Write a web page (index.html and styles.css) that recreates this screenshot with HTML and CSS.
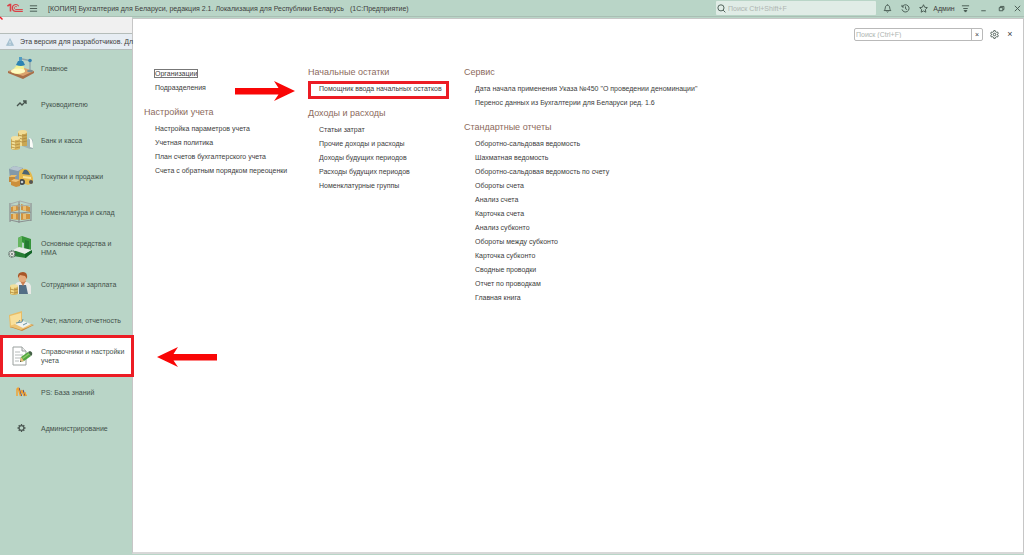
FILE: index.html
```html
<!DOCTYPE html>
<html lang="ru">
<head>
<meta charset="utf-8">
<meta name="viewport" content="width=device-width, initial-scale=1">
<title>Бухгалтерия для Беларуси</title>
<link rel="stylesheet" href="styles.css">
</head>
<body>
<div class="app">
  <header class="titlebar">
    <svg class="logo" viewBox="0 0 16 10" fill="none" stroke="#dc3f45"><path d="M.4 3.200 2.700 1.500H3.500V8.500" stroke-width="1.600"/><path d="M11.700 3.300A3.400 3.400 0 1 0 8.800 8.400H15.800" stroke-width="1.100"/><path d="M10 4.100A1.500 1.500 0 1 0 8.800 6.500H15.800" stroke-width=".9"/></svg>
    <button class="tool menu-button" aria-label="Меню"><svg viewBox="0 0 10 10" class="icon"><path d="M1 2h8M1 5h8M1 8h8"/></svg></button>
    <h1 class="title">[КОПИЯ] Бухгалтерия для Беларуси, редакция 2.1. Локализация для Республики Беларусь <span class="suffix">(1С:Предприятие)</span></h1>
    <label class="global-search">
      <svg viewBox="0 0 10 10" class="icon"><circle cx="4.400" cy="4.300" r="3.400"/><path d="m6.800 6.800 2.500 2.500"/></svg>
      <input type="text" aria-label="Глобальный поиск" placeholder="Поиск Ctrl+Shift+F">
    </label>
    <div class="tools">
      <button class="tool" aria-label="Уведомления"><svg viewBox="0 0 10 10" class="icon"><path d="M1.300 7.300h7.400C7.500 6.200 7.700 5 7.300 3.400 7 2 6.200 1.300 5 1.300S3 2 2.700 3.400C2.300 5 2.500 6.200 1.300 7.300ZM4 8.300q1 1.400 2 0M5 .4v1"/></svg></button>
      <button class="tool" aria-label="История"><svg viewBox="0 0 10 10" class="icon"><path d="M1.400 3A4 4 0 1 1 1.100 6M1.100 1v2.300h2.300M5 2.700V5.200L6.800 6.300"/></svg></button>
      <button class="tool" aria-label="Избранное"><svg viewBox="0 0 10 10" class="icon"><path d="m5 .8 1.300 2.800 3 .4-2.200 2.100.5 3L5 7.700 2.400 9.100l.5-3L.7 4l3-.4Z"/></svg></button>
      <button class="user">Админ</button>
      <button class="tool" aria-label="Настройка окна"><svg viewBox="0 0 10 10" class="icon"><path d="M1 2h8M2.500 5h5"/><path d="M3.500 7.200h3L5 9Z" fill="#42534c"/></svg></button>
      <button class="tool" aria-label="Свернуть"><svg viewBox="0 0 10 10" class="icon"><path d="M2.500 7.500h5"/></svg></button>
      <button class="tool" aria-label="Восстановить"><svg viewBox="0 0 10 10" class="icon"><path d="M2.500 4h4v3.500h-4zM3.700 4V2.700h4v3.500H6.500"/></svg></button>
      <button class="tool" aria-label="Закрыть окно"><svg viewBox="0 0 10 10" class="icon"><path d="m2 2 6 6m0-6-6 6"/></svg></button>
    </div>
  </header>

  <div class="workspace">
    <aside class="sidebar">
      <div class="tabstrip"><svg class="tick" viewBox="0 0 3 3"><path d="M0 0 2.500 2.500" stroke="#ec1c24" stroke-width="1.400"/></svg></div>
      <p class="notice"><svg viewBox="0 0 10 10" class="warning"><path d="M5 .7 9.500 9.300H.5Z" fill="#a9c3d3" stroke="#8fb0c4" stroke-width=".6"/><path d="M5 3.500v3m0 .9v1" stroke="#edf2f6"/></svg>Эта версия для разработчиков. Дл</p>
      <nav class="sections">
        <a class="section" href="#main"><span class="picture"><svg viewBox="0 0 26 24">
          <path d="m0 15 13-4 13 4-11 7Z" fill="#dba36e"/><path d="m0 15 15 5 11-5v2l-11 6L0 17Z" fill="#a96f48"/><path d="m9 9-6 7q6 4 14 0l-2-8Z" fill="#f3f295"/><ellipse cx="10" cy="15" rx="7" ry="2.500" fill="#fffbc2"/><path d="m8 9 2-4h5l2 4q-4 2-9 0Z" fill="#2c83b3"/><path d="M11 5V1h3v4" fill="#4f9cc4"/><path d="m14 3 8 1.500V15" stroke="#8fa5ac" stroke-width="1.300" fill="none"/><circle cx="22" cy="4.500" r="1.800" fill="#327fb1"/><ellipse cx="22" cy="15" rx="3" ry="1.300" fill="#7b8e91"/>
        </svg></span><span>Главное</span></a>
        <a class="section" href="#head"><span class="picture"><svg viewBox="0 0 26 24"><path d="m9 14 3-3 2 2 4-4m-3 0h3v3" fill="none" stroke="#46534d" stroke-width="1.300"/></svg></span><span>Руководителю</span></a>
        <a class="section" href="#bank"><span class="picture"><svg viewBox="0 0 26 24">
          <path d="m14 15 8-5 3 2v9h-3l-8-3Z" fill="#9fb5b4"/><path d="M21 10q4-1 4 10l-3-1v-7Z" fill="#fbfcf8"/><path d="M10 4h9v14h-9Z" fill="#c9a753"/><path d="M11 4h3v14h-3Z" fill="#efdb91"/><ellipse cx="14.500" cy="4" rx="4.500" ry="2" fill="#f0dc96"/><path d="M10 7q4 2 9 0m-9 3q4 2 9 0m-9 3q4 2 9 0" stroke="#ac8840" fill="none" stroke-width=".8"/><path d="M3 10h9v11q-5 2-9 0Z" fill="#d8b660"/><path d="M4 10h3v11H4Z" fill="#f2df98"/><ellipse cx="7.500" cy="10" rx="4.500" ry="2" fill="#f4e2a1"/><path d="M3 13q4 2 9 0m-9 3q4 2 9 0m-9 3q4 2 9 0" stroke="#b18b3f" fill="none" stroke-width=".8"/>
        </svg></span><span>Банк и касса</span></a>
        <a class="section" href="#sales"><span class="picture"><svg viewBox="0 0 26 24">
          <path d="m1 5 5-3 9 2v12H2Z" fill="#8299aa"/><path d="m1 5 5-3 9 2-5 3Z" fill="#b6c5cf"/><path d="M11 9q1-5 7-4 5 1 7 9v5l-5 2-9-3Z" fill="#e5b94c"/><path d="m14 10 2-4q4-1 6 5Z" fill="#4c6473"/><path d="m15 12 8 1v2l-8-1Z" fill="#f8e39a"/><circle cx="14" cy="18" r="3" fill="#42474a"/><circle cx="14" cy="18" r="1.300" fill="#c7cecd"/><circle cx="23" cy="18" r="2" fill="#555"/><path d="M1 13h6v5H1Z" fill="#bf893d"/><path d="m1 13 2-2h6l-2 2Z" fill="#e9bc6b"/><path d="m3 17 3-2 6 1v6l-4 1-5-2Z" fill="#cc8f3c"/><path d="m3 17 3-2 6 1-4 2Z" fill="#eec279"/>
        </svg></span><span>Покупки и продажи</span></a>
        <a class="section" href="#stock"><span class="picture"><svg viewBox="0 0 26 24">
          <path d="m3 7 9-3v6l-9 2Zm10-3 9 3v5l-9-2Zm-10 10 9-1v7l-9-1Zm10-1 9 1v5l-9 1Z" fill="#cf9340"/><path d="m5 6 3-1v5l-3 1Zm10-1 3 1v5l-3-1ZM5 14h3v5H5Zm10 0h3v5h-3Z" fill="#ebbd70"/><path d="M2 3v19M11 1v22M23 3v18M2 12l9 1 12-1M2 20l9 2 12-2" stroke="#8b9090" stroke-width="1.200" fill="none"/><path d="M2 4 12 1l11 3M2 5l9 1 12-1" stroke="#a7adab" fill="none"/>
        </svg></span><span>Номенклатура и склад</span></a>
        <a class="section" href="#assets"><span class="picture"><svg viewBox="0 0 26 24">
          <path d="m10 2 4-2 9 3v14l-7-2V7l-3-1v9l-3-1Z" fill="#36943b"/><path d="m10 2 4-2v13l-4 1Z" fill="#66b660"/><path d="m17 4 4 1v10l-4-1Z" fill="#267a32"/><path d="m5 16 6-3 13 3-6 6-13-2Z" fill="#287d35"/><path d="m5 14 6-3 13 3-7 4Z" fill="#e7ece8"/><path d="m17 18 7-4v3l-7 5Z" fill="#146428"/><circle cx="4" cy="18" r="3" fill="#e0e4df" stroke="#52605a" stroke-width="1.500" stroke-dasharray="1 .6"/><circle cx="4" cy="18" r="1" fill="#6a756e"/>
        </svg></span><span>Основные средства и НМА</span></a>
        <a class="section" href="#staff"><span class="picture"><svg viewBox="0 0 26 24">
          <path d="M7 22V13q2-4 7-3 7-1 9 4v8Z" fill="#e9e9e6"/><path d="M11 13h7l2 9h-9Z" fill="#536e85"/><path d="m12 9 3 5 3-5" fill="#cb8053"/><circle cx="14.500" cy="6" r="4" fill="#e5aa7b"/><path d="M10 6q-1-6 5-6 5 0 4 7l-2-3-5-1Z" fill="#a85627"/><path d="M2 14h8v8q-4 2-8 0Z" fill="#d5b159"/><path d="M3 14h3v8H3Z" fill="#f2dc8c"/><ellipse cx="6" cy="14" rx="4" ry="1.800" fill="#f2df9b"/><path d="M2 17q4 2 8 0m-8 3q4 2 8 0" stroke="#ad883f" fill="none" stroke-width=".8"/>
        </svg></span><span>Сотрудники и зарплата</span></a>
        <a class="section" href="#tax"><span class="picture"><svg viewBox="0 0 26 24">
          <path d="m1 7 13-4v12L2 20Z" fill="#e8bd67"/><path d="m2 8 11-3v9L3 18Z" fill="#f8df9b"/><path d="m2 19 12-5 12 3-12 6Z" fill="#c88a3d"/><path d="m1 18 13-4 11 3-12 5Z" fill="#edc474"/><path d="m7 16 8-3 8 3-8 4Z" fill="#eef3f1"/><path d="m8 15 6-1 1-3m-5 4 2-3m3 5 4-2" stroke="#68919f" fill="none"/>
        </svg></span><span>Учет, налоги, отчетность</span></a>
        <a class="section selected" href="#refs" aria-current="page"><span class="picture"><svg viewBox="0 0 26 24">
          <path d="M5 3h9l4 4v14H5Z" fill="#fff" stroke="#9aa09e"/><path d="M14 3v4h4" fill="#eee" stroke="#9aa09e"/><path d="M7 8h5m-5 3h8m-8 3h6m-6 3h4" stroke="#b6bbba"/><path d="m12 18 1-5 7-5 3 4-7 5Z" fill="#51a640"/><path d="m14 14 7-5 1 1-7 5Z" fill="#8ccb67"/><path d="m12 18 1-5 3 4Z" fill="#ecbb7d"/><path d="m12 18 .3-1.500 1 1Z" fill="#333"/><path d="m20 8 2-1q3 1 2 4l-1 1Z" fill="#456147"/>
        </svg></span><span>Справочники и настройки учета</span></a>
        <a class="section" href="#kb"><span class="picture"><svg viewBox="0 0 26 24"><path d="m11 8 2.500 8M15 10l2 6" stroke="#684f68" stroke-width="1.200" fill="none"/><path d="M9 16V9l1-1 2.500 8M13.500 13v-3l2.500 6M17 12v1l1.500 3" fill="none" stroke="#f4a02b" stroke-width="1.400"/></svg></span><span>PS: База знаний</span></a>
        <a class="section" href="#admin"><span class="picture"><svg viewBox="0 0 26 24"><circle cx="13.500" cy="12" r="2.400" fill="none" stroke="#4c5853" stroke-width="1.200"/><path d="M13.500 8v1.500m0 5V16m-4-4H11m5 0h1.500m-6.800-2.800 1 1m3.600 3.600 1 1m0-5.600-1 1m-3.600 3.600-1 1" stroke="#4c5853" stroke-width="1.300"/></svg></span><span>Администрирование</span></a>
      </nav>
      <svg class="callout-arrow to-section" viewBox="0 0 60 20"><path d="M0 10 21 0l-4.500 7H60v6.500H16.500L21 20Z" fill="#f90606"/></svg>
    </aside>

    <main class="panel">
      <div class="panel-bar">
        <div class="search-box">
          <input type="text" aria-label="Поиск в разделе" placeholder="Поиск (Ctrl+F)">
          <button class="clear" aria-label="Очистить">×</button>
        </div>
        <button class="tool" aria-label="Настройка"><svg viewBox="0 0 10 10" class="icon"><circle cx="5" cy="5" r="1.400"/><path d="m4.200.7h1.600l.3 1.200 1.200.6 1.100-.3.800 1.400-.8.900v1l.8.900-.8 1.400-1.100-.3-1.200.6-.3 1.200H4.200l-.3-1.200-1.200-.6-1.100.3-.8-1.400.8-.9v-1l-.8-.9.8-1.400 1.100.3 1.200-.6Z"/></svg></button>
        <button class="close" aria-label="Закрыть">×</button>
      </div>
      <div class="columns">
        <div class="column">
          <ul class="links"><li><a class="focused" href="#l1">Организации</a></li><li><a href="#l2">Подразделения</a></li></ul>
          <section><h2>Настройки учета</h2>
          <ul class="links"><li><a href="#l3">Настройка параметров учета</a></li><li><a href="#l4">Учетная политика</a></li><li><a href="#l5">План счетов бухгалтерского учета</a></li><li><a href="#l6">Счета с обратным порядком переоценки</a></li></ul></section>
        </div>
        <div class="column">
          <section><h2>Начальные остатки</h2>
          <ul class="links"><li class="marked"><a href="#l7">Помощник ввода начальных остатков</a>
            <svg class="callout-arrow to-link" viewBox="0 0 60 20"><path d="M60 10 39 0l4.500 7H0v6.500h43.500L39 20Z" fill="#f90606"/></svg></li></ul></section>
          <section><h2>Доходы и расходы</h2>
          <ul class="links"><li><a href="#l8">Статьи затрат</a></li><li><a href="#l9">Прочие доходы и расходы</a></li><li><a href="#l10">Доходы будущих периодов</a></li><li><a href="#l11">Расходы будущих периодов</a></li><li><a href="#l12">Номенклатурные группы</a></li></ul></section>
        </div>
        <div class="column">
          <section><h2>Сервис</h2>
          <ul class="links"><li><a href="#l13">Дата начала применения Указа №450 "О проведении деноминации"</a></li><li><a href="#l14">Перенос данных из Бухгалтерии для Беларуси ред. 1.6</a></li></ul></section>
          <section><h2>Стандартные отчеты</h2>
          <ul class="links"><li><a href="#l15">Оборотно-сальдовая ведомость</a></li><li><a href="#l16">Шахматная ведомость</a></li><li><a href="#l17">Оборотно-сальдовая ведомость по счету</a></li><li><a href="#l18">Обороты счета</a></li><li><a href="#l19">Анализ счета</a></li><li><a href="#l20">Карточка счета</a></li><li><a href="#l21">Анализ субконто</a></li><li><a href="#l22">Обороты между субконто</a></li><li><a href="#l23">Карточка субконто</a></li><li><a href="#l24">Сводные проводки</a></li><li><a href="#l25">Отчет по проводкам</a></li><li><a href="#l26">Главная книга</a></li></ul></section>
        </div>
      </div>
    </main>
  </div>
</div>
</body>
</html>
```
FILE: styles.css
```css
* { box-sizing: border-box; }
body, h1, h2, p, ul { margin: 0; padding: 0; }
body { font-family: "Liberation Sans", Arial, sans-serif; font-size: 7px; line-height: 9px; color: #3d3d3d; background: #b9d5c7; }
button, input { font: inherit; color: inherit; border: 0; background: none; padding: 0; margin: 0; }
a { color: inherit; text-decoration: none; }
ul { list-style: none; }
svg { display: block; overflow: visible; }

.app { min-height: 100vh; display: flex; flex-direction: column; }

.titlebar { display: flex; align-items: center; height: 17px; padding-left: 7px; border-bottom: 1px solid #a9bfb4; }
.logo { width: 16px; height: 10px; }
.tool { display: grid; place-items: center; width: 18px; height: 16px; flex: none; }
.icon { width: 9px; height: 9px; fill: none; stroke: #42534c; stroke-width: 1; }
.menu-button { margin: 0 6px 0 1px; }
.title { flex: 1; font-size: 7px; font-weight: 400; white-space: nowrap; }
.suffix { margin-left: 4px; }
.global-search { display: flex; align-items: center; gap: 2px; width: 160px; height: 14px; padding: 0 1px; background: #e0ece6; border-radius: 1px; }
.global-search input { flex: 1; min-width: 0; }
input::placeholder { color: #aeb5b1; opacity: 1; }
.tools { display: flex; align-items: center; padding-left: 2px; }
.tools .tool:last-child { width: 14px; }
.user { width: 24px; text-align: center; }

.workspace { flex: 1; display: grid; grid-template-columns: 132px 1fr; }
.sidebar { position: relative; min-width: 0; }
.tabstrip { height: 16px; background: #f0f0f0; }
.tick { width: 3px; height: 3px; }
.notice { display: flex; align-items: center; gap: 6px; height: 17px; padding-left: 6px; white-space: nowrap; background: #e7edf3; border: solid #b5bdba; border-width: 1px 0; }
.warning { width: 8px; height: 8px; flex: none; }
.section { display: flex; align-items: center; gap: 7px; height: 36px; padding: 0 6px 0 8px; color: #43504a; }
.picture { flex: none; width: 26px; }
.picture svg { width: 26px; height: 24px; }
.selected { position: relative; background: #fff; }
.selected::after { content: ""; position: absolute; inset: -3px -2px -3px 0; border: 3px solid #ec1c24; z-index: 2; }
.callout-arrow { position: absolute; width: 60px; height: 20px; z-index: 2; }
.to-section { left: 157px; top: 330px; }

.panel { margin: 1px 0 1px; background: #fff; border: 1px solid #c6c6c6; border-bottom: 2px solid #d8d8d8; }
.panel-bar { display: flex; justify-content: flex-end; align-items: center; height: 31px; padding-right: 6px; }
.search-box { display: flex; width: 129px; height: 13px; margin-right: 2px; border: 1px solid #b9b9b9; border-radius: 2px; }
.search-box input { flex: 1; min-width: 0; padding-left: 1px; }
.clear { width: 11px; border-left: 1px solid #b9b9b9; }
.close { width: 14px; font-size: 9px; }
.columns { display: grid; grid-template-columns: 164px 156px 1fr; padding: 14px 0 0 11px; }
.column { display: flex; flex-direction: column; gap: 9px; }
.column > .links { padding-top: 3px; }
h2 { margin-bottom: 2px; font-size: 9px; line-height: 16px; font-weight: 400; color: #8c6a5c; }
.links { padding-left: 11px; }
.links li { height: 14px; line-height: 14px; white-space: nowrap; }
.focused { outline: 1px solid #777; }
.marked { position: relative; width: fit-content; }
.marked::before { content: ""; position: absolute; inset: -1px -7px -3px -11px; border: 3px solid #ec1c24; }
.to-link { right: 100%; top: -1px; margin-right: 24px; }
```
